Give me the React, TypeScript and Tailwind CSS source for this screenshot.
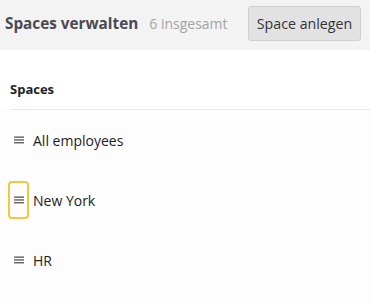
import React from "react";

function MenuIcon() {
  return (
    <svg width="10" height="8" viewBox="0 0 10 8" className="block">
      <rect x="0" y="0.5" width="10" height="1.3" fill="#555" />
      <rect x="0" y="3.3" width="10" height="1.3" fill="#555" />
      <rect x="0" y="6.1" width="10" height="1.3" fill="#555" />
    </svg>
  );
}

function Row({ label, focused }: { label: string; focused?: boolean }) {
  return (
    <div className="h-[60px] flex items-center">
      <div
        className={
          focused
            ? "ml-[8px] w-[21px] h-[38px] flex items-center justify-center rounded-[4px] border-2 border-[#f5c640]"
            : "ml-[8px] w-[21px] h-[38px] flex items-center justify-center"
        }
      >
        <MenuIcon />
      </div>
      <span className="ml-[4px] text-[14px] text-[#222] whitespace-nowrap">{label}</span>
    </div>
  );
}

export default function App() {
  return (
    <div
      className="w-[370px] h-[303px] bg-[#fdfdfd] overflow-hidden"
      style={{ fontFamily: '"Open Sans", sans-serif' }}
    >
      <div className="h-[50px] bg-[#f3f3f3] flex items-start justify-between pl-[5px] pr-[9px]">
        <div className="mt-[12px] flex items-baseline whitespace-nowrap">
          <span className="text-[15.3px] font-bold text-[#4a4a52]">Spaces verwalten</span>
          <span className="ml-[11px] text-[14px] text-[#a3a3a3]">6 insgesamt</span>
        </div>
        <button className="mt-[6px] h-[35px] w-[113px] bg-[#e2e2e2] border border-[#cfcfcf] rounded-[3px] text-[14.2px] text-[#333] whitespace-nowrap">
          Space anlegen
        </button>
      </div>
      <div className="bg-white">
        <div className="ml-[10px] h-[60px] border-b border-[#e8e8e8] flex items-end pb-[10px]">
          <span className="text-[13px] font-bold text-[#222]">Spaces</span>
        </div>
      </div>
      <Row label="All employees" />
      <Row label="New York" focused />
      <Row label="HR" />
    </div>
  );
}
